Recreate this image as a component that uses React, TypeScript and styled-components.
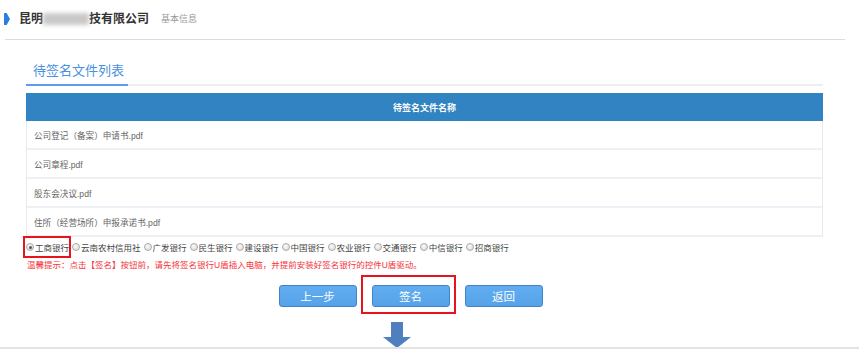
import React from "react";
import styled, { createGlobalStyle } from "styled-components";

const Global = createGlobalStyle`
  html, body { margin: 0; padding: 0; background: #fff; }
  body { font-family: "Liberation Sans", "Noto Sans CJK SC", sans-serif; width: 859px; height: 349px; overflow: hidden; }
  * { box-sizing: border-box; }
`;

const Page = styled.div`
  width: 859px;
  height: 349px;
  position: relative;
  display: flex;
  flex-direction: column;
`;

const Header = styled.div`
  height: 40px;
  margin: 0 14px 0 5px;
  border-bottom: 1px solid #dcdcdc;
  display: flex;
  align-items: center;
  padding-bottom: 1px;
`;

const Marker = styled.svg`
  width: 6px;
  height: 12px;
  margin-left: -1px;
  margin-right: 9px;
  flex: none;
`;

const Title = styled.span`
  font-size: 12px;
  font-weight: bold;
  color: #333;
  line-height: 16px;
  display: flex;
  align-items: center;
`;

const Blur = styled.span`
  display: inline-block;
  width: 46px;
  height: 12px;
  background: #c9c9c9;
  filter: blur(2px);
`;

const SubTitle = styled.span`
  font-size: 9px;
  color: #999;
  margin-left: 12px;
  line-height: 12px;
`;

const Content = styled.div`
  padding-left: 26px;
  width: 823px;
  display: flex;
  flex-direction: column;
`;

const TabBar = styled.div`
  margin-top: 18px;
  border-bottom: 2px solid #eeeeee;
  display: flex;
`;

const Tab = styled.div`
  width: 102px;
  height: 28px;
  margin-bottom: -2px;
  padding-left: 7px;
  border-bottom: 2px solid #5b9cec;
  color: #4a8fe0;
  font-size: 13px;
  line-height: 26px;
`;

const Table = styled.div`
  margin-top: 7px;
  border-left: 1px solid #e4eaf0;
  border-right: 1px solid #e4eaf0;
  display: flex;
  flex-direction: column;
`;

const HeadRow = styled.div`
  height: 28px;
  background: #3183c1;
  color: #fff;
  font-weight: bold;
  font-size: 9px;
  display: flex;
  align-items: center;
  justify-content: center;
  margin: 0 -1px;
`;

const Row = styled.div`
  height: 29px;
  border-bottom: 2px solid #edf1f5;
  padding-left: 7px;
  color: #666;
  font-size: 8.6px;
  display: flex;
  align-items: center;
`;

const RadioRow = styled.div`
  position: relative;
  height: 20px;
  display: flex;
  align-items: center;
  font-size: 8.5px;
  color: #444;
`;

const RadioItem = styled.label`
  display: flex;
  align-items: center;
  margin-right: 3px;
  white-space: nowrap;
`;

const Circle = styled.span<{ $checked?: boolean }>`
  width: 8px;
  height: 8px;
  border-radius: 50%;
  border: 1px solid #a9a9a9;
  background: radial-gradient(circle at 40% 35%, #fafafa, #d6d6d6);
  margin-right: 1px;
  display: flex;
  align-items: center;
  justify-content: center;
  &::after {
    content: "";
    width: 3px;
    height: 3px;
    border-radius: 50%;
    background: ${(p) => (p.$checked ? "#555" : "transparent")};
  }
`;

const RedFrame = styled.div<{ $l: number; $t: number; $w: number; $h: number }>`
  position: absolute;
  left: ${(p) => p.$l}px;
  top: ${(p) => p.$t}px;
  width: ${(p) => p.$w}px;
  height: ${(p) => p.$h}px;
  border: 2px solid #e8141b;
  pointer-events: none;
`;

const Warning = styled.div`
  height: 16px;
  line-height: 16px;
  font-size: 8.5px;
  color: #f5333a;
  padding-left: 1px;
`;

const ButtonRow = styled.div`
  margin-top: 12px;
  display: flex;
  justify-content: center;
  gap: 15px;
  padding-right: 28px;
`;

const ButtonWrap = styled.div`
  position: relative;
`;

const Button = styled.button`
  width: 78px;
  height: 22px;
  border: 1px solid #3f84c6;
  border-radius: 3px;
  background: linear-gradient(#62adf0, #56a2e8);
  color: #fff;
  font-family: "Noto Sans CJK SC", sans-serif;
  font-size: 11.5px;
  line-height: 18px;
  padding: 0;
  display: flex;
  align-items: center;
  justify-content: center;
`;

const ArrowRow = styled.div`
  margin-top: 15px;
  padding-left: 357px;
  height: 26px;
  display: flex;
`;

const Bottom = styled.div`
  position: absolute;
  left: 0;
  right: 0;
  bottom: 0;
  height: 2px;
  background: #e3e3e3;
`;

const files = [
  "公司登记（备案）申请书.pdf",
  "公司章程.pdf",
  "股东会决议.pdf",
  "住所（经营场所）申报承诺书.pdf",
];

const banks = [
  "工商银行",
  "云南农村信用社",
  "广发银行",
  "民生银行",
  "建设银行",
  "中国银行",
  "农业银行",
  "交通银行",
  "中信银行",
  "招商银行",
];

export default function App() {
  return (
    <Page>
      <Global />
      <Header>
        <Marker viewBox="0 0 6 12">
          <path d="M0 0.5 Q0 0 0.6 0 L2.6 0 L6 6 L2.6 12 L0.6 12 Q0 12 0 11.5 Z" fill="#2a7fe2" />
        </Marker>
        <Title>
          昆明<Blur />技有限公司
        </Title>
        <SubTitle>基本信息</SubTitle>
      </Header>
      <Content>
        <TabBar>
          <Tab>待签名文件列表</Tab>
        </TabBar>
        <Table>
          <HeadRow>待签名文件名称</HeadRow>
          {files.map((f) => (
            <Row key={f}>{f}</Row>
          ))}
        </Table>
        <RadioRow>
          {banks.map((b, i) => (
            <RadioItem key={b}>
              <Circle $checked={i === 0} />
              {b}
            </RadioItem>
          ))}
          <RedFrame $l={-3} $t={-1} $w={48} $h={22} />
        </RadioRow>
        <Warning>温馨提示：点击【签名】按钮前，请先将签名银行U盾插入电脑，并提前安装好签名银行的控件U盾驱动。</Warning>
        <ButtonRow>
          <ButtonWrap>
            <Button>上一步</Button>
          </ButtonWrap>
          <ButtonWrap>
            <Button>签名</Button>
            <RedFrame $l={-11} $t={-10} $w={95} $h={39} />
          </ButtonWrap>
          <ButtonWrap>
            <Button>返回</Button>
          </ButtonWrap>
        </ButtonRow>
        <ArrowRow>
          <svg width="28" height="26" viewBox="0 0 28 26">
            <rect x="8" y="0" width="12" height="15" fill="#4f7fbe" />
            <path d="M0 15 L28 15 L14 26 Z" fill="#4f7fbe" />
          </svg>
        </ArrowRow>
      </Content>
      <Bottom />
    </Page>
  );
}
